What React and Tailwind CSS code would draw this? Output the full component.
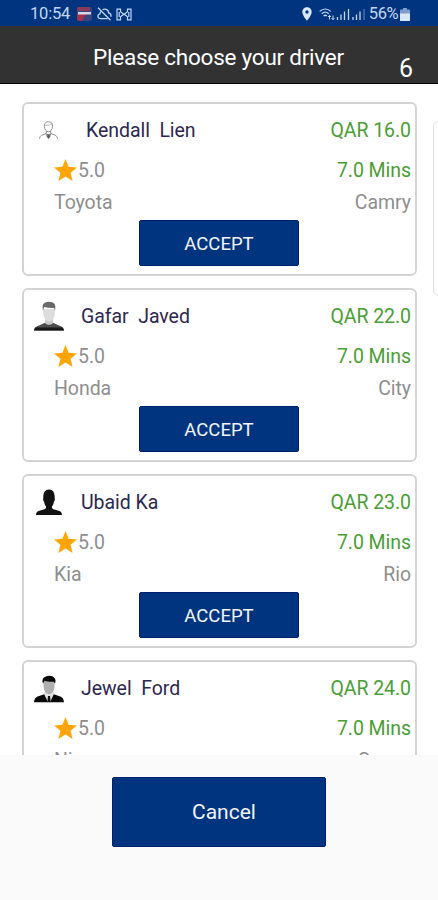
import { MdLocationOn } from 'react-icons/md';

const drivers = [
  { name: 'Kendall  Lien', price: '16.0', make: 'Toyota', model: 'Camry', avatar: 'outline' },
  { name: 'Gafar  Javed', price: '22.0', make: 'Honda', model: 'City', avatar: 'grey' },
  { name: 'Ubaid Ka', price: '23.0', make: 'Kia', model: 'Rio', avatar: 'silhouette' },
  { name: 'Jewel  Ford', price: '24.0', make: 'Nissan', model: 'Sunny', avatar: 'suit' },
];

const Avatar = ({ type }) => {
  if (type === 'outline') {
    return (
      <svg className="ml-[15px] mr-[28px] w-[19px] h-[19px] shrink-0" viewBox="0 0 19 19" fill="none" stroke="#777" strokeWidth="0.8">
        <path d="M5.400 5.500C5 2.200 7 .8 9.500.8s4.500 1.400 4.100 4.700c-.3 3-2 5.300-4.100 5.300S5.700 8.500 5.400 5.500Z" />
        <path d="M5.500 4.300c2.500.4 5-.2 6.300-1.300l1.800 1.700" strokeWidth="0.5" />
        <path d="M7.300 10v2.500L2.800 14.200C1.400 14.800.8 16 .5 17.800M11.700 10v2.500l4.500 1.700c1.400.6 2 1.800 2.300 3.600" />
        <path d="M6.800 12.500l2.700 4.800 2.700-4.800M7.500 13.500h4" />
        <path d="M8.500 13.500h2l.5 2-1.500 2-1.500-2Z" fill="#555" />
      </svg>
    );
  }
  if (type === 'grey') {
    return (
      <svg className="ml-[10px] mr-[17px] w-[30px] h-[30px] shrink-0" viewBox="0 0 30 30">
        <path d="M0 29.500c.4-3 2-4.300 5-5.100l6-2.600h8l6 2.600c3 .8 4.600 2.100 5 5.100Z" fill="#4d4d4d" />
        <path d="M0 29.500c.3-1.600.8-2.300 1.500-3h27c.7.7 1.200 1.400 1.500 3Z" fill="#171717" />
        <path d="M11 17.500h8v4.300c-1.300 2.700-6.700 2.700-8 0Z" fill="#c9c9c9" />
        <path d="M9 8h12l-.4 6c-.6 3.700-3 6.500-5.600 6.500S10 17.700 9.400 14Z" fill="#dcdcdc" />
        <path d="M9 9.500C8 4.500 8.800 1 15 .8c6.200.2 7 3.700 6 8.700l-.9-2.500c-3.300.3-6.800-.2-10-1Z" fill="#686868" />
      </svg>
    );
  }
  if (type === 'silhouette') {
    return (
      <svg className="ml-[12px] mr-[19px] w-[26px] h-[26px] shrink-0" viewBox="0 0 26 26" fill="#111">
        <path d="M0 26c.1-2.400 1-3.500 3.500-4.200l5-1.600c1.400-.5 1.800-1.500 1.300-3.100-1-1.200-1.500-2.700-1.700-4.600C7.300 12.200 7 10.500 7.300 9c-.2-5.300 1.700-8.500 5.700-8.500S18.900 3.700 18.700 9c.3 1.500 0 3.200-.8 3.500-.2 1.900-.7 3.400-1.700 4.600-.5 1.600-.1 2.600 1.300 3.100l5 1.600C25 22.500 25.900 23.600 26 26Z" />
      </svg>
    );
  }
  return (
    <svg className="ml-[10px] mr-[17px] mt-[2px] w-[30px] h-[28px] shrink-0" viewBox="0 0 30 28">
      <path d="M10.500 16.500h9l1 4.500-5.500 6.500-5.500-6.500Z" fill="#e4e4e4" />
      <path d="M9.200 6h11.600l-.5 7c-.5 3.500-2.800 6.200-5.300 6.200S10.200 16.500 9.700 13Z" fill="#b0b0b0" />
      <path d="M9 8.500C7.600 4.500 9.300 2.800 11 2c3-1.700 7.500-1.600 9.500 1 1.300 1.600 1.200 3.500.5 5.500L19.800 6.700c-3.600.2-6.400-.1-9.200-1Z" fill="#080808" />
      <path d="M0 27.200c.4-4 2-5.200 4.500-6l5.700-2 3.800 8ZM30 27.200c-.4-4-2-5.200-4.500-6l-5.700-2-3.800 8Z" fill="#080808" />
      <path d="M14 21h2l.7 6.200h-3.400Z" fill="#111" />
    </svg>
  );
};

const Star = () => (
  <svg className="h-[22px] w-[23px] shrink-0" viewBox="0 0 23 22" fill="#ffa50a">
    <path d="M11.500 0 14.600 7.700 23 8.400 16.600 13.800 18.600 22 11.500 17.600 4.400 22 6.400 13.800 0 8.400 8.400 7.700Z" />
  </svg>
);

const StatusBar = () => (
  <div className="flex h-[26px] items-center bg-[#00347f] pl-[30px] pr-[28px] pt-[2px] text-[#c3d6f5]">
    <span className="w-[47px] pt-px text-[16.500px] leading-none tracking-[-0.2px]">10:54</span>
    <svg className="w-[15px] h-[14px]" viewBox="0 0 15 14">
      <rect width="15" height="14" rx="2" fill="#35457f" />
      <path d="M0 7h9l-4 7H2a2 2 0 0 1-2-2Z" fill="#a7304f" />
      <path d="M2 0h11v4H0V2a2 2 0 0 1 2-2Z" fill="#8c3a5c" />
      <path d="M1 5h13v2.500H1Z" fill="#d7d9e8" />
    </svg>
    <svg className="ml-[5px] w-[15px] h-[14px]" viewBox="0 0 15 14" fill="none" stroke="currentColor" strokeWidth="1.300">
      <path d="M1 .8l12.500 12.400M5.500 2.700c3-1.600 6.200.2 6.200 3.300 1.800.3 2.800 2 2 3.800M10.500 11.700H3.700C.4 11.700-.1 7.400 3 6.800c0-.8.200-1.500.6-2.100" />
    </svg>
    <svg className="ml-[4px] w-[16px] h-[13px]" viewBox="0 0 16 13" fill="none" stroke="currentColor" strokeWidth="1.200">
      <path d="M4.500 1.200H1v10.600h3.500V8.700L8 6l3.500 2.700v3.100H15V1.200h-3.500v2.600L8 6.500 4.500 3.800ZM3.200 4v5M12.800 4v5" />
    </svg>
    <MdLocationOn className="ml-auto text-[16px] text-[#d9e6fb]" />
    <svg className="ml-[4px] w-[46px] h-[14px]" viewBox="0 0 46 14" fill="none" stroke="currentColor" strokeWidth="1.300">
      <path d="M.7 4.400C4 1.300 8.500 1.300 11.800 4.400M2.700 6.800c2.100-1.900 5-1.900 7.100 0M4.600 9c1.100-.9 2.300-.9 3.300 0" />
      <path d="M10.500 12.500V8.500M9 10l1.500-1.700L12 10M14 8.500v4M12.500 11l1.500 1.700 1.500-1.700" strokeWidth="1" />
      <path d="M18.500 10v3M22 7.500V13M25.500 4.500V13M29.500 2V13" />
      <path d="M34 10v3M37.500 7.500V13M41 4.500V13" />
      <path d="M45 2V13" stroke="#4f78b5" />
    </svg>
    <span className="ml-[4px] whitespace-nowrap pt-px text-[16.500px] leading-none tracking-[-0.500px]">56%</span>
    <svg className="ml-[2px] w-[10px] h-[13px]" viewBox="0 0 10 13">
      <path d="M3 0h4v1.500h2.200c.5 0 .8.300.8.800V12c0 .6-.4 1-1 1H1c-.6 0-1-.4-1-1V2.300c0-.5.300-.8.800-.8H3Z" fill="#7e9dcd" />
      <path d="M0 5.500h10V12c0 .6-.4 1-1 1H1c-.6 0-1-.4-1-1Z" fill="#dbe6f8" />
    </svg>
  </div>
);

const DriverCard = ({ driver }) => (
  <div className="h-[174px] shrink-0 rounded-[6px] border-2 border-[#d4d4d4] bg-white pt-[3px] pr-[4px] text-[19.500px] tracking-[-0.05px] text-[#8e8e8e]">
    <div className="flex h-[46px] items-center">
      <Avatar type={driver.avatar} />
      <span className="whitespace-pre pt-px text-[#2d2850]">{driver.name}</span>
      <span className="ml-auto pt-px text-[#4a9e35]">QAR {driver.price}</span>
    </div>
    <div className="flex h-[34px] items-center pl-[30px]">
      <Star />
      <span className="ml-px pt-px">5.0</span>
      <span className="ml-auto pt-px text-[#4a9e35]">7.0 Mins</span>
    </div>
    <div className="flex h-[30px] items-center justify-between pl-[30px] pt-px">
      <span>{driver.make}</span>
      <span>{driver.model}</span>
    </div>
    <button className="mt-[3px] ml-[115px] block h-[46px] w-[160px] rounded-[2px] border border-[#00206e] bg-[#00347f] pt-[3px] text-[18.500px] tracking-normal text-[#f1f5fc]">
      ACCEPT
    </button>
  </div>
);

const App = () => {
  return (
    <div className="flex h-[900px] w-[438px] flex-col overflow-hidden bg-[#fafafa] font-['Roboto',sans-serif]">
      <StatusBar />
      <header className="flex h-[58px] shrink-0 border-b border-black bg-[#323232] text-white">
        <h1 className="w-[390px] pl-[93px] pt-[16px] text-[22.500px] leading-[30px] tracking-[-0.24px] whitespace-nowrap">Please choose your driver</h1>
        <span className="pl-[9px] pt-[28px] text-[25px] leading-[30px]">6</span>
      </header>

      <main className="flex h-[671px] shrink-0 overflow-hidden bg-white pl-[22px] pt-[18px]">
        <div className="flex w-[395px] shrink-0 flex-col gap-3">
          {drivers.map((driver) => (
            <DriverCard key={driver.name} driver={driver} />
          ))}
        </div>
        {/* edge of the next page */}
        <div className="mt-[19px] ml-[16px] h-[175px] w-[395px] shrink-0 rounded-[6px] border border-[#dedede]" />
      </main>

      <footer className="flex flex-1 items-start pl-[112px] pt-[22px]">
        <button className="h-[70px] w-[214px] rounded-[2px] border border-[#00206e] bg-[#00347f] pl-[10px] pt-[2px] text-[21px] text-[#f1f5fc]">
          Cancel
        </button>
      </footer>
    </div>
  );
};

export default App;
